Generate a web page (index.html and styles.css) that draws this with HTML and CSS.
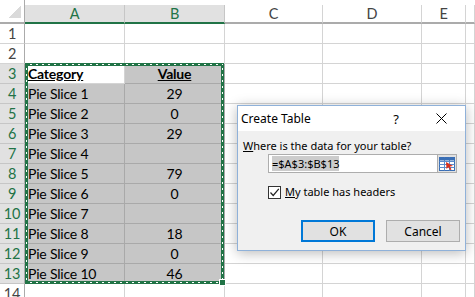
FILE: index.html
```html
<!DOCTYPE html>
<html lang="en">
<head>
    <meta charset="UTF-8">
    <title>Create Table</title>
    <link rel="stylesheet" href="styles.css">
</head>
<body>
    <div class="sheet">
        <div class="row hdr">
            <div class="cell corner"><span class="tri"></span></div>
            <div class="cell col sel">A</div>
            <div class="cell col sel">B</div>
            <div class="cell col">C</div>
            <div class="cell col">D</div>
            <div class="cell col">E</div>
            <div class="cell col"></div>
        </div>
        <div class="row">
            <div class="cell num">1</div>
            <div class="cell"></div><div class="cell"></div><div class="cell"></div><div class="cell"></div><div class="cell"></div><div class="cell"></div>
        </div>
        <div class="row">
            <div class="cell num">2</div>
            <div class="cell"></div><div class="cell"></div><div class="cell"></div><div class="cell"></div><div class="cell"></div><div class="cell"></div>
        </div>
        <div class="row">
            <div class="cell num on">3</div>
            <div class="cell data head"><u>Category</u></div>
            <div class="cell data mid head shade"><u>Value</u></div>
            <div class="cell"></div><div class="cell"></div><div class="cell"></div><div class="cell"></div>
        </div>
        <div class="row">
            <div class="cell num on">4</div>
            <div class="cell data shade">Pie Slice 1</div>
            <div class="cell data mid shade">29</div>
            <div class="cell"></div><div class="cell"></div><div class="cell"></div><div class="cell"></div>
        </div>
        <div class="row">
            <div class="cell num on">5</div>
            <div class="cell data shade">Pie Slice 2</div>
            <div class="cell data mid shade">0</div>
            <div class="cell"></div><div class="cell"></div><div class="cell"></div><div class="cell"></div>
        </div>
        <div class="row">
            <div class="cell num on">6</div>
            <div class="cell data shade">Pie Slice 3</div>
            <div class="cell data mid shade">29</div>
            <div class="cell"></div><div class="cell"></div><div class="cell"></div><div class="cell"></div>
        </div>
        <div class="row">
            <div class="cell num on">7</div>
            <div class="cell data shade">Pie Slice 4</div>
            <div class="cell data mid shade"></div>
            <div class="cell"></div><div class="cell"></div><div class="cell"></div><div class="cell"></div>
        </div>
        <div class="row">
            <div class="cell num on">8</div>
            <div class="cell data shade">Pie Slice 5</div>
            <div class="cell data mid shade">79</div>
            <div class="cell"></div><div class="cell"></div><div class="cell"></div><div class="cell"></div>
        </div>
        <div class="row">
            <div class="cell num on">9</div>
            <div class="cell data shade">Pie Slice 6</div>
            <div class="cell data mid shade">0</div>
            <div class="cell"></div><div class="cell"></div><div class="cell"></div><div class="cell"></div>
        </div>
        <div class="row">
            <div class="cell num on">10</div>
            <div class="cell data shade">Pie Slice 7</div>
            <div class="cell data mid shade"></div>
            <div class="cell"></div><div class="cell"></div><div class="cell"></div><div class="cell"></div>
        </div>
        <div class="row">
            <div class="cell num on">11</div>
            <div class="cell data shade">Pie Slice 8</div>
            <div class="cell data mid shade">18</div>
            <div class="cell"></div><div class="cell"></div><div class="cell"></div><div class="cell"></div>
        </div>
        <div class="row">
            <div class="cell num on">12</div>
            <div class="cell data shade">Pie Slice 9</div>
            <div class="cell data mid shade">0</div>
            <div class="cell"></div><div class="cell"></div><div class="cell"></div><div class="cell"></div>
        </div>
        <div class="row">
            <div class="cell num on">13</div>
            <div class="cell data shade">Pie Slice 10</div>
            <div class="cell data mid shade">46</div>
            <div class="cell"></div><div class="cell"></div><div class="cell"></div><div class="cell"></div>
        </div>
        <div class="row">
            <div class="cell num">14</div>
            <div class="cell"></div><div class="cell"></div><div class="cell"></div><div class="cell"></div><div class="cell"></div><div class="cell"></div>
        </div>

        <!-- copy marquee around A3:B13 -->
        <div class="marquee"><span class="handle"></span></div>
    </div>

    <div class="dialog">
        <div class="titlebar">
            <span class="title">Create Table</span>
            <span class="help">?</span>
            <svg class="close" width="11" height="11" viewBox="0 0 11 11">
                <path d="M0.5 0.5 L10.5 10.5 M10.5 0.5 L0.5 10.5" stroke="#000" stroke-width="1" fill="none"/>
            </svg>
        </div>
        <div class="body">
            <div class="prompt"><u>W</u>here is the data for your table?</div>
            <div class="indent">
                <div class="refbox">
                    <div class="reftext"><span class="hl">=$A$3:$B$13</span></div>
                    <div class="refbtn">
                        <svg width="16" height="14" viewBox="0 0 16 14">
                            <rect x="0.5" y="0.5" width="15" height="13" fill="#fff" stroke="#3a6fb5"/>
                            <path d="M0.5 4.5 H15.5 M0.5 7.5 H15.5 M0.5 10.5 H15.5 M5.5 0.5 V13.5 M10.5 0.5 V13.5" stroke="#5d8ccc" fill="none"/>
                            <rect x="0.5" y="0.5" width="15" height="3" fill="#3a6fb5"/>
                            <path d="M7 5 L14 9 L11 9.5 L12.5 12.5 L11 13 L9.5 10 L7.5 12 Z" fill="#d8301c"/>
                        </svg>
                    </div>
                </div>
                <label class="check">
                    <span class="box">
                        <svg width="11" height="11" viewBox="0 0 11 11">
                            <path d="M1.5 5.5 L4.2 8.5 L9.8 1.8" stroke="#222" stroke-width="1.2" fill="none"/>
                        </svg>
                    </span>
                    <span><u>M</u>y table has headers</span>
                </label>
            </div>
            <div class="buttons">
                <button class="btn ok">OK</button>
                <button class="btn">Cancel</button>
            </div>
        </div>
    </div>
</body>
</html>
```

FILE: styles.css
```css
body {
    margin: 0;
    background: #fff;
    font-family: Lato, "Liberation Sans", sans-serif;
    overflow: hidden;
}

.sheet {
    position: relative;
    width: 475px;
    height: 297px;
}

.row {
    display: grid;
    grid-template-columns: 25px 100px 100px 98px 99px 44px 1fr;
    height: 20px;
}

.cell {
    box-sizing: border-box;
    border-right: 1px solid #d4d4d4;
    border-bottom: 1px solid #d4d4d4;
    font-size: 14px;
    letter-spacing: -0.2px;
    line-height: 20px;
    color: #000;
    white-space: nowrap;
    overflow: hidden;
}

/* column header row */
.hdr {
    box-sizing: border-box;
    height: 24px;
    padding-top: 5px;
}

.hdr .cell {
    border-bottom: 2px solid #ababab;
    color: #444;
    text-align: center;
    font-size: 14.5px;
    line-height: 17px;
    background: #fff;
}

.hdr .col.sel {
    background: #e1e1e1;
    color: #217346;
    border-bottom-color: #217346;
    border-right-color: #c6c6c6;
}

.hdr .corner {
    margin-top: -5px;
    height: 24px;
    display: flex;
    align-items: flex-end;
    justify-content: flex-end;
    padding: 0 3px 4px 0;
    border-bottom-color: #ababab;
    border-right-color: #ababab;
}

.tri {
    width: 12px;
    height: 12px;
    background: linear-gradient(to top left, #dadada 50%, transparent 51%);
}

/* row numbers */
.num {
    text-align: center;
    color: #444;
    font-size: 14.5px;
    border-right-color: #ababab;
}

.num.on {
    background: #e1e1e1;
    color: #217346;
    border-bottom-color: #c6c6c6;
}

/* table data */
.data {
    padding-left: 3px;
}

.data.mid {
    text-align: center;
    padding-left: 0;
}

.shade {
    background: #c6c6c6;
    border-color: #a9a9a9;
}

.head {
    font-weight: bold;
}

.marquee {
    position: absolute;
    left: 25px;
    top: 63px;
    width: 199px;
    height: 221px;
    box-sizing: border-box;
    border: 3px solid #217346;
}

/* white ticks running along the middle of the green band */
.marquee::after {
    content: "";
    position: absolute;
    inset: -2px;
    background:
        repeating-linear-gradient(90deg, transparent 0 4px, #fff 4px 6px) top left / 100% 1px no-repeat,
        repeating-linear-gradient(90deg, transparent 0 4px, #fff 4px 6px) bottom left / 100% 1px no-repeat,
        repeating-linear-gradient(180deg, transparent 0 4px, #fff 4px 6px) top left / 1px 100% no-repeat,
        repeating-linear-gradient(180deg, transparent 0 4px, #fff 4px 6px) top right / 1px 100% no-repeat;
}

.handle {
    position: absolute;
    right: -5px;
    bottom: -5px;
    width: 5px;
    height: 5px;
    background: #217346;
    border: 1px solid #fff;
    z-index: 1;
}

/* dialog */
.dialog {
    position: absolute;
    left: 237px;
    top: 105px;
    width: 229px;
    height: 146px;
    box-sizing: border-box;
    border: 1px solid #8fb1d9;
    background: #f0f0f0;
    box-shadow: 0 2px 12px rgba(0, 0, 0, 0.28);
    font-family: "Noto Sans", "Open Sans", sans-serif;
    font-size: 11px;
    color: #000;
}

.titlebar {
    display: flex;
    align-items: center;
    height: 25px;
    background: #fff;
    padding-left: 3px;
}

.title {
    flex: 1;
    font-size: 12px;
}

.help {
    width: 12px;
    text-align: right;
    font-size: 13px;
    margin-right: 37px;
}

.close {
    margin-right: 18px;
}

.body {
    padding: 8px 0 0 5px;
}

.prompt {
    line-height: 14px;
}

.indent {
    padding-left: 25px;
    padding-top: 1px;
}

.refbox {
    display: flex;
    width: 189px;
    height: 19px;
    box-sizing: border-box;
    border: 1px solid #adadad;
    background: #fff;
}

.reftext {
    flex: 1;
    padding: 1px 0 0 3px;
    line-height: 15px;
}

.hl {
    background: #cccccc;
}

.refbtn {
    width: 18px;
    background: #e1e1e1;
    border-left: 1px solid #adadad;
    display: flex;
    align-items: center;
    justify-content: center;
}

.check {
    display: flex;
    align-items: center;
    gap: 4px;
    margin-top: 12px;
    line-height: 14px;
}

.box {
    width: 13px;
    height: 13px;
    box-sizing: border-box;
    border: 1px solid #333;
    background: #fff;
    display: flex;
    align-items: center;
    justify-content: center;
}

.buttons {
    display: flex;
    gap: 11px;
    margin: 21px 0 0 58px;
}

.btn {
    width: 74px;
    height: 22px;
    box-sizing: border-box;
    border: 1px solid #adadad;
    background: #e1e1e1;
    font-family: inherit;
    font-size: 12px;
    padding: 0;
    color: #000;
}

.btn.ok {
    border: 2px solid #0078d7;
}
```
